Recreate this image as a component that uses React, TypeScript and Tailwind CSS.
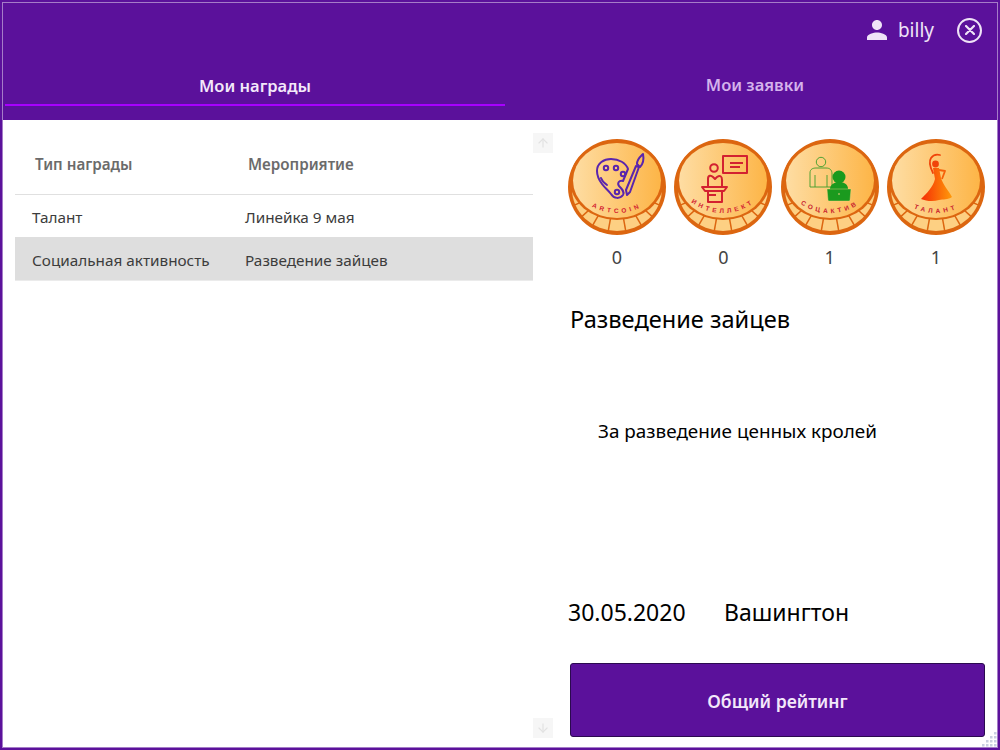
import { useId } from "react";
import { ArrowDown, ArrowUp } from "lucide-react";

const font = "font-['Noto_Sans','Open_Sans',sans-serif]";

function Coin({ label, labelColor, children }: { label: string; labelColor: string; children: React.ReactNode }) {
  const id = useId();
  const ticks = [-68, -50, -32, -11, 11, 32, 50, 68];
  return (
    <svg viewBox="0 0 100 100" className="w-[100px] h-[100px]">
      <defs>
        <linearGradient id={id + "g"} x1="0" x2="1" y1="0" y2="0">
          <stop offset="0" stopColor="#fedda3" />
          <stop offset="1" stopColor="#fdb547" />
        </linearGradient>
        <path id={id + "p"} d="M 2 44 A 52 52 0 0 0 98 44" fill="none" />
      </defs>
      <ellipse cx="50" cy="50" rx="49" ry="48" fill="#dc6610" />
      <ellipse cx="50" cy="52" rx="45" ry="42" fill="#fdd083" />
      {ticks.map((a) => {
        const s = Math.sin((a * Math.PI) / 180);
        const c = Math.cos((a * Math.PI) / 180);
        return <line key={a} x1={50 + 34 * s} y1={52 + 30 * c} x2={50 + 46 * s} y2={52 + 43 * c} stroke="#dc6610" strokeWidth="1.5" />;
      })}
      <ellipse cx="50" cy="43.5" rx="47" ry="39.5" fill="#dc6610" />
      <ellipse cx="50" cy="43.5" rx="44" ry="37.5" fill={`url(#${id}g)`} />
      {children}
      <text fontSize="6.4" fontWeight="700" fill={labelColor} letterSpacing="3.3" fontFamily="Liberation Sans, sans-serif">
        <textPath href={`#${id}p`} startOffset="50%" textAnchor="middle">
          {label}
        </textPath>
      </text>
    </svg>
  );
}

function Palette() {
  return (
    <g fill="none" stroke="#5a25ad" strokeWidth="2" strokeLinecap="round" strokeLinejoin="round">
      <path d="M 30 34 C 30 26 37 22 44 22 C 52 22 59 26 61 32 L 56 44 C 52 43 50 46 52 49 C 55 52 58 55 56 58 C 53 62 47 62 44 57 C 41 53 38 51 35 47 C 32 43 30 39 30 34 Z" />
      <circle cx="39" cy="31" r="2.2" />
      <circle cx="49" cy="31" r="2.2" />
      <circle cx="56" cy="37" r="2.2" />
      <circle cx="50" cy="55" r="2.2" />
      <path d="M 34 41 C 35 44 37 46 40 48" />
      <path d="M 59 53 L 69 29 L 72 30 L 63 55 L 60 58 Z" />
      <path d="M 70 27 C 70 22 73 20 76 17 C 77 22 76 27 73 30 Z" />
    </g>
  );
}

function Speaker() {
  return (
    <g fill="none" stroke="#d32130" strokeWidth="2" strokeLinejoin="round">
      <rect x="50" y="19" width="24" height="17" />
      <path d="M 57 26 H 70 M 57 30 H 67" />
      <circle cx="41" cy="31" r="3.8" />
      <path d="M 35 49 V 42 C 35 38 38 38 40 40 L 42 42 L 44 40 C 47 38 49 39 49 43 V 49" />
      <path d="M 29 50 H 54 L 51 54 H 32 Z" />
      <path d="M 35 54 V 65 H 49 V 54 M 35 58 H 43" />
    </g>
  );
}

function People() {
  return (
    <g>
      <g fill="none" stroke="#3e9c2a" strokeWidth="0.9">
        <circle cx="41" cy="25" r="4.7" />
        <path d="M 30 50 V 36 C 30 32 33 31 36 31 H 46 C 50 31 52 33 52 37 V 50 Z" />
        <path d="M 35 38 V 50 M 47 38 V 50" />
      </g>
      <circle cx="59" cy="40" r="6.5" fill="#1b9a1e" />
      <path d="M 50 52 C 50 48 54 45 59 45 C 65 45 68 48 68 52 Z" fill="#1b9a1e" />
      <path d="M 47 52 H 71 L 70 63 Q 70 64 69 64 H 49 Q 48 64 48 63 Z" fill="#1b9a1e" stroke="#fed58c" strokeWidth="0.4" />
      <circle cx="59" cy="57" r="0.8" fill="#fed58c" />
    </g>
  );
}

function Dancer() {
  const id = useId();
  return (
    <g>
      <defs>
        <linearGradient id={id} gradientUnits="userSpaceOnUse" x1="35" x2="66" y1="0" y2="0">
          <stop offset="0" stopColor="#f52c05" />
          <stop offset="1" stopColor="#ff9a0a" />
        </linearGradient>
      </defs>
      <circle cx="49.5" cy="27" r="3.4" fill="#f0440a" />
      <path d="M 47 36 C 44 30 43 24 45 21 C 47 18 50 17 54 18" fill="none" stroke="#f0440a" strokeWidth="1.8" strokeLinecap="round" />
      <path d="M 53 33 L 59 34 L 56 42" fill="none" stroke="#f6600a" strokeWidth="1.8" strokeLinejoin="round" />
      <path
        d="M 47 31 L 53 31 L 55 41 C 57 48 63 54 66 60 C 62 63 57 62 53 63 C 47 65 40 64 35 62 C 41 56 47 50 49 42 Z"
        fill={`url(#${id})`}
      />
    </g>
  );
}

function HeaderBar() {
  return (
    <div className="bg-[#5b119b] h-[117px] shrink-0 flex flex-col overflow-hidden">
      <div className="flex items-center justify-end h-[54px] pr-[15px] text-[#efe3f7]">
        <svg viewBox="0 0 24 24" className="w-[30px] h-[30px] mr-[6px]" fill="currentColor">
          <path d="M12 12c2.21 0 4-1.79 4-4s-1.79-4-4-4-4 1.79-4 4 1.79 4 4 4zm0 2c-2.67 0-8 1.34-8 4v2h16v-2c0-2.66-5.33-4-8-4z" />
        </svg>
        <span className="text-[19px] leading-none mr-[23px]">billy</span>
        <div className="w-[25px] h-[25px] rounded-full border-[2.5px] border-[#efe3f7] flex items-center justify-center">
          <svg viewBox="0 0 10 10" className="w-[10px] h-[10px]" stroke="currentColor" strokeWidth="2.2" strokeLinecap="round">
            <path d="M1 1 L9 9 M9 1 L1 9" />
          </svg>
        </div>
      </div>
      <div className="flex h-[49px] text-[16.5px] font-semibold">
        <div className="w-[500px] shrink-0 ml-[2px] border-b-2 border-[#a800ff] flex items-center justify-center text-[#f3e8fa] pt-[12px]">
          Мои награды
        </div>
        <div className="w-[500px] shrink-0 flex items-center justify-center text-[#d5b3ec] pt-[8px]">Мои заявки</div>
      </div>
    </div>
  );
}

function AwardsTable() {
  return (
    <div className="w-[530px] shrink-0 pl-[12px] text-[#3c3c3c]">
      <div className="h-[75px] border-b border-[#e0e0e0] flex items-center text-[15.2px] font-semibold text-[#6b6b6b] pt-[14px]">
        <div className="w-[233px] pl-[20px]">Тип награды</div>
        <div>Мероприятие</div>
      </div>
      <div className="h-[42px] flex items-center text-[15.3px] pt-[2px]">
        <div className="w-[230px] pl-[17px]">Талант</div>
        <div>Линейка 9 мая</div>
      </div>
      <div className="h-[44px] flex items-center text-[15.3px] bg-[#dedede] pt-[4px] border-b border-[#ebebeb]">
        <div className="w-[230px] pl-[17px]">Социальная активность</div>
        <div>Разведение зайцев</div>
      </div>
    </div>
  );
}

function ScrollColumn() {
  return (
    <div className="w-[22px] shrink-0 flex flex-col justify-between pt-[13px] pb-[9px] text-[#e2e2e2]">
      <div className="w-[20px] h-[20px] bg-[#f6f6f6] flex items-center justify-center">
        <ArrowUp className="w-[14px] h-[14px]" />
      </div>
      <div className="w-[20px] h-[20px] bg-[#f6f6f6] flex items-center justify-center">
        <ArrowDown className="w-[14px] h-[14px]" />
      </div>
    </div>
  );
}

function Detail() {
  const coins = [
    { label: "ARTCOIN", color: "#d32130", count: 0, art: <Palette /> },
    { label: "ИНТЕЛЛЕКТ", color: "#d32130", count: 0, art: <Speaker /> },
    { label: "СОЦАКТИВ", color: "#c8202e", count: 1, art: <People /> },
    { label: "ТАЛАНТ", color: "#c8202e", count: 1, art: <Dancer /> },
  ];
  return (
    <div className="flex-1 flex flex-col pl-[15px] pb-[10px] text-black">
      <div className="flex justify-between pt-[17px] -ml-[3px] w-[419px]">
        {coins.map((c) => (
          <div key={c.label} className="flex flex-col items-center w-[100px]">
            <Coin label={c.label} labelColor={c.color}>
              {c.art}
            </Coin>
            <span className="text-[18px] leading-[24px] mt-[8px] text-[#444]">{c.count}</span>
          </div>
        ))}
      </div>
      <div className="text-[23.6px] leading-[32px] mt-[34px]">Разведение зайцев</div>
      <div className="text-[18.9px] leading-[26px] mt-[83px] pl-[28px]">За разведение ценных кролей</div>
      <div className="flex text-[23px] leading-[32px] mt-[152px] -ml-[2px]">
        <span className="w-[156px]">30.05.2020</span>
        <span>Вашингтон</span>
      </div>
      <button className="mt-auto h-[74px] w-[415px] bg-[#5b119b] border border-[#2b0a50] rounded-[3px] text-[#f3e8fa] text-[17.6px] font-semibold pt-[3px]">
        Общий рейтинг
      </button>
    </div>
  );
}

function ResizeGrip() {
  const dots = [
    [12, 0],
    [8, 4],
    [12, 4],
    [4, 8],
    [8, 8],
    [12, 8],
    [0, 12],
    [4, 12],
    [8, 12],
    [12, 12],
  ];
  return (
    <svg viewBox="0 0 15 15" className="absolute right-0 bottom-0 w-[15px] h-[15px]" fill="#c9cfe0">
      {dots.map(([x, y]) => (
        <rect key={`${x}-${y}`} x={x} y={y} width="2.5" height="2.5" />
      ))}
    </svg>
  );
}

export default function App() {
  return (
    <div className={`${font} w-[1000px] h-[750px] bg-[#5b119b] p-[2px]`}>
      <div className="relative h-full border border-[#a57cc8] flex flex-col overflow-hidden">
        <HeaderBar />
        <div className="flex-1 flex min-h-0 bg-white">
          <AwardsTable />
          <ScrollColumn />
          <Detail />
        </div>
        <ResizeGrip />
      </div>
    </div>
  );
}
